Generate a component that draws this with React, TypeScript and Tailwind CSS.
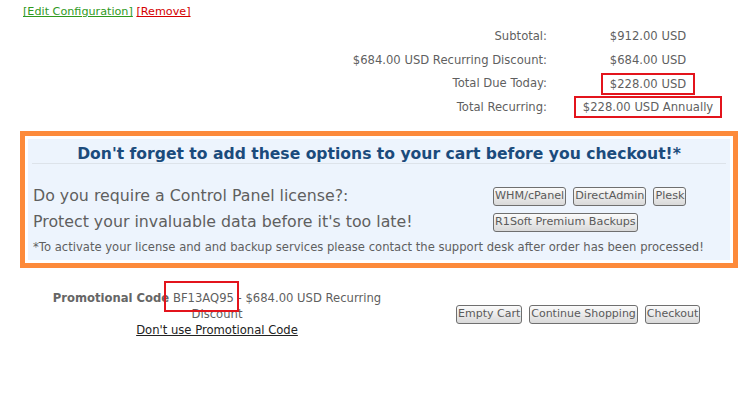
import * as React from "react";

const totals = [
  { label: "Subtotal:", value: "$912.00 USD", boxed: false },
  { label: "$684.00 USD Recurring Discount:", value: "$684.00 USD", boxed: false },
  { label: "Total Due Today:", value: "$228.00 USD", boxed: true },
  { label: "Total Recurring:", value: "$228.00 USD Annually", boxed: true },
];

function Btn({ children, small }: { children: React.ReactNode; small?: boolean }) {
  return (
    <button
      type="button"
      className={
        "h-[19px] rounded-[3px] border border-[#6f6f6f] bg-gradient-to-b from-[#fbfbfb] to-[#d9d9d9] px-[1px] leading-[16px] text-[#5a5a5a] " +
        (small ? "text-[11px]" : "text-[11.2px]")
      }
    >
      {children}
    </button>
  );
}

export default function App() {
  return (
    <div className="h-[410px] w-[747px] overflow-hidden bg-white font-['DejaVu_Sans',Verdana,sans-serif] text-[#5f5f5f]">
      <div className="pl-[23px] pt-[5px] text-[11.2px] leading-[14px]">
        <a href="#" className="text-[#2f9a1e] underline">[Edit Configuration]</a>{" "}
        <a href="#" className="text-[#d40000] underline">[Remove]</a>
      </div>

      {/* totals */}
      <div className="mt-[6px] text-[11.6px]">
        {totals.map((r) => (
          <div key={r.label} className="flex h-[23.5px] items-center">
            <div className="w-[547px] text-right">{r.label}</div>
            <div className="ml-[3px] w-[196px] text-center">
              {r.boxed ? (
                <span className="inline-block border-2 border-[#e3141c] px-[7px] py-[2px] leading-[14px]">
                  {r.value}
                </span>
              ) : (
                r.value
              )}
            </div>
          </div>
        ))}
      </div>

      {/* upsell box */}
      <div className="ml-[20px] mt-[12px] w-[718px] border-[5px] border-[#fd8a3a] p-[3px]">
        <div className="bg-[#edf4fd] px-[5px] pb-[6px] pt-[6px]">
          <div className="mx-[-1px] border-b border-[#dde3ea] text-center text-[15.6px] font-bold leading-[18px] text-[#1b4b7c]">
            Don't forget to add these options to your cart before you checkout!*
          </div>
          <div className="mt-[20px] flex h-[24px] items-center">
            <div className="w-[460px] text-[15.8px]">Do you require a Control Panel license?:</div>
            <div className="flex gap-[7px]">
              <Btn>WHM/cPanel</Btn>
              <Btn>DirectAdmin</Btn>
              <Btn>Plesk</Btn>
            </div>
          </div>
          <div className="mt-[2px] flex h-[24px] items-center">
            <div className="w-[460px] text-[15.8px]">Protect your invaluable data before it's too late!</div>
            <Btn>R1Soft Premium Backups</Btn>
          </div>
          <div className="mt-[6px] text-[11.6px] leading-[14px]">
            *To activate your license and and backup services please contact the support desk after order has been processed!
          </div>
        </div>
      </div>

      {/* promo + actions */}
      <div className="mt-[22px] flex items-center">
        <div className="ml-[35px] w-[364px] text-center text-[11.6px] leading-[16px]">
          <b className="text-[#666]">Promotional Code</b>{" "}
          <span className="relative">
            BF13AQ95
            <span className="absolute -bottom-[7px] -left-[9px] -right-[5px] -top-[10px] border-2 border-[#e3141c]" />
          </span>{" "}
          - $684.00 USD Recurring Discount
          <br />
          <a href="#" className="text-[#222] underline">Don't use Promotional Code</a>
        </div>
        <div className="flex gap-[7px] pl-[57px]">
          <Btn small>Empty Cart</Btn>
          <Btn small>Continue Shopping</Btn>
          <Btn small>Checkout</Btn>
        </div>
      </div>
    </div>
  );
}
